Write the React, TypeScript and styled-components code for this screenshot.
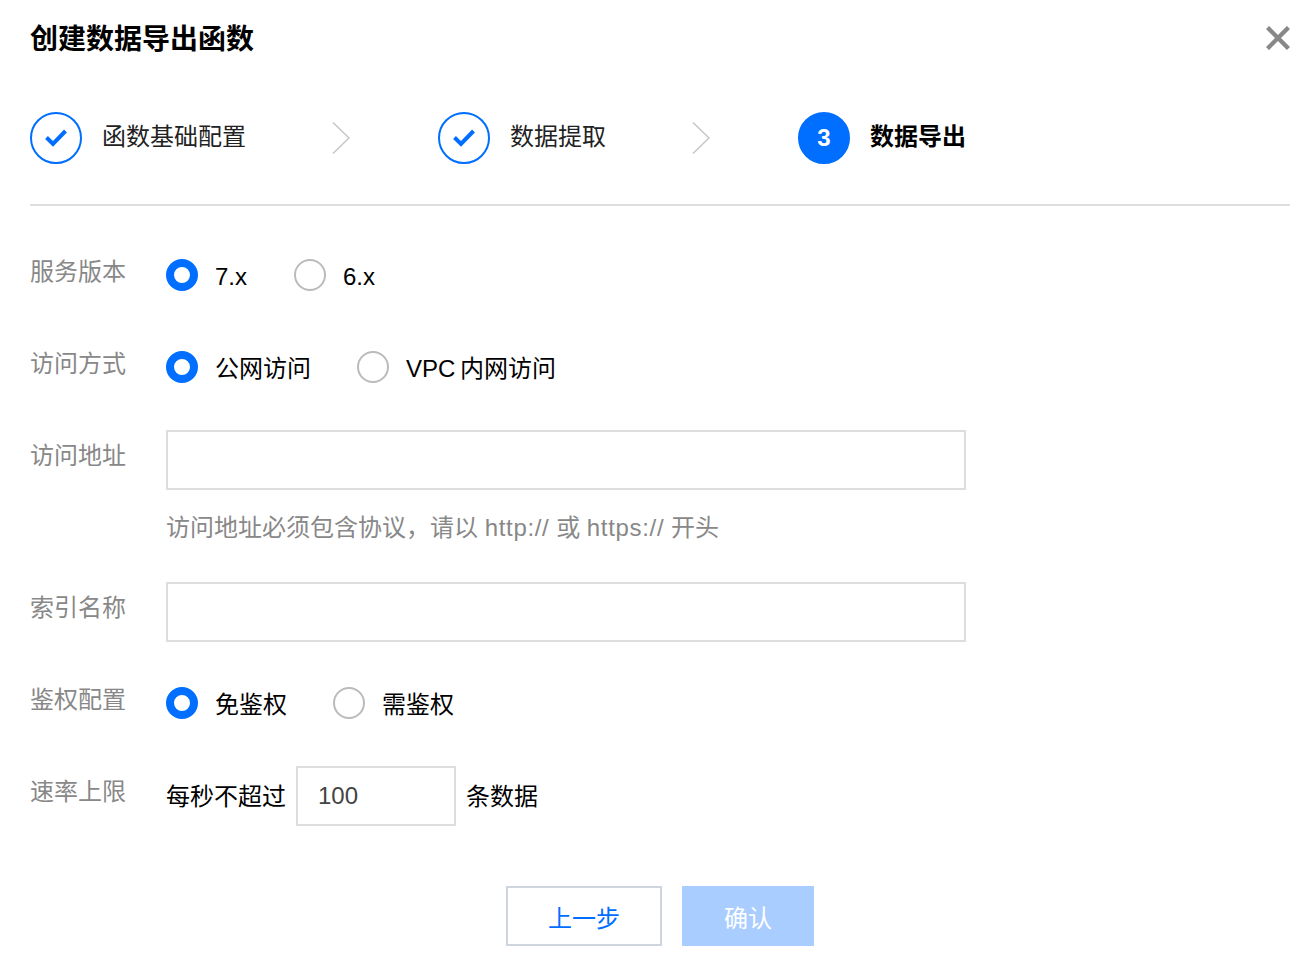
import styled, { createGlobalStyle } from "styled-components";

const GlobalStyle = createGlobalStyle`
  html, body {
    margin: 0;
    padding: 0;
    background: #fff;
  }
  * {
    box-sizing: border-box;
  }
  body, input, button {
    font-family: "Liberation Sans", "Noto Sans CJK SC", sans-serif;
  }
`;

const blue = "#006eff";

const Dialog = styled.div`
  width: 1316px;
  height: 964px;
  padding: 20px 26px 18px 30px;
  overflow: hidden;
  font-size: 24px;
  color: #000;
`;

const TitleBar = styled.div`
  display: flex;
  align-items: center;
  justify-content: space-between;
  height: 36px;
`;

const Title = styled.h2`
  margin: 4px 0 0;
  font-size: 28px;
  line-height: 36px;
  font-weight: 700;
`;

const CloseBtn = styled.svg`
  display: block;
  width: 24px;
  height: 24px;
`;

const Steps = styled.div`
  display: flex;
  align-items: center;
  margin-top: 56px;
  height: 52px;
`;

const Step = styled.div`
  display: flex;
  align-items: center;
`;

const StepCircle = styled.div<{ $active?: boolean }>`
  width: 52px;
  height: 52px;
  border-radius: 50%;
  display: flex;
  align-items: center;
  justify-content: center;
  border: 2px solid ${blue};
  background: ${(props) => (props.$active ? blue : "#fff")};
  color: #fff;
  font-size: 24px;
  font-weight: 700;
`;

const StepLabel = styled.span<{ $active?: boolean }>`
  font-size: 24px;
  line-height: 36px;
  margin-left: 20px;
  margin-top: -2px;
  font-weight: ${(props) => (props.$active ? 700 : 400)};
  color: ${(props) => (props.$active ? "#000" : "#222")};
`;

const StepArrow = styled.svg`
  display: block;
  width: 18px;
  height: 32px;
  margin: 0 88px 0 86px;
  flex: none;
`;

const Divider = styled.div`
  width: 1260px;
  height: 2px;
  margin-top: 40px;
  background: #ddd;
`;

const Form = styled.div`
  display: flex;
  flex-direction: column;
  gap: 32px;
  margin-top: 40px;
`;

const Row = styled.div`
  display: flex;
  align-items: flex-start;
`;

const Label = styled.div`
  width: 136px;
  flex: none;
  line-height: 52px;
  color: #888;
`;

const Control = styled.div`
  min-height: 60px;
  display: flex;
  flex-direction: column;
`;

const RadioGroup = styled.div`
  display: flex;
  align-items: center;
  gap: 46px;
  height: 58px;
`;

const RadioItem = styled.label`
  display: flex;
  align-items: center;
  gap: 17px;
`;

const RadioDot = styled.span<{ $checked?: boolean }>`
  width: 32px;
  height: 32px;
  border-radius: 50%;
  flex: none;
  background: #fff;
  border: ${(props) => (props.$checked ? `8px solid ${blue}` : "2px solid #bbb")};
`;

const RadioText = styled.span<{ $latin?: boolean }>`
  margin: ${(props) => (props.$latin ? "4px 1px 0 0" : "0 0 2px")};
  word-spacing: -2px;
`;

const TextInput = styled.input<{ $w: number }>`
  display: block;
  width: ${(props) => props.$w}px;
  height: 60px;
  padding: 0 20px;
  border: 2px solid #ddd;
  border-radius: 0;
  outline: none;
  background: #fff;
  font-size: 24px;
  color: #444;
`;

const Help = styled.div`
  height: 60px;
  padding-top: 20px;
  line-height: 36px;
  color: #888;
`;

const HelpLink = styled.span`
  letter-spacing: 0.68px;
`;

const RateLine = styled.div`
  display: flex;
  align-items: center;
  gap: 10px;
  height: 60px;
`;

const RateText = styled.span`
  margin-bottom: 4px;
`;

const Footer = styled.div`
  display: flex;
  justify-content: center;
  gap: 20px;
  width: 1260px;
  margin-top: 60px;
`;

const Button = styled.button<{ $primary?: boolean }>`
  height: 60px;
  width: ${(props) => (props.$primary ? "132px" : "156px")};
  padding: 0;
  border: ${(props) => (props.$primary ? "none" : "2px solid #cfd5de")};
  border-radius: 0;
  background: ${(props) => (props.$primary ? "#aacdff" : "#fff")};
  color: ${(props) => (props.$primary ? "#fff" : blue)};
  font-size: 24px;
`;

function Check() {
  return (
    <svg width="24" height="20" viewBox="0 0 24 20" fill="none">
      <path d="M2.5 9.5 L9 16 L21.5 3" stroke={blue} strokeWidth="4" />
    </svg>
  );
}

function Arrow() {
  return (
    <StepArrow viewBox="0 0 18 32" fill="none">
      <path d="M1 0.5 L17 16 L1 31.5" stroke="#c4c4c4" strokeWidth="1.4" />
    </StepArrow>
  );
}

function Radio({ checked, latin, children }: { checked?: boolean; latin?: boolean; children: string }) {
  return (
    <RadioItem>
      <RadioDot $checked={checked} />
      <RadioText $latin={latin}>{children}</RadioText>
    </RadioItem>
  );
}

export default function App() {
  return (
    <Dialog>
      <GlobalStyle />
      <TitleBar>
        <Title>创建数据导出函数</Title>
        <CloseBtn viewBox="0 0 24 24" fill="none">
          <path d="M1.5 1.5 L22.5 22.5 M22.5 1.5 L1.5 22.5" stroke="#888" strokeWidth="4.4" />
        </CloseBtn>
      </TitleBar>

      <Steps>
        <Step>
          <StepCircle>
            <Check />
          </StepCircle>
          <StepLabel>函数基础配置</StepLabel>
        </Step>
        <Arrow />
        <Step>
          <StepCircle>
            <Check />
          </StepCircle>
          <StepLabel>数据提取</StepLabel>
        </Step>
        <Arrow />
        <Step>
          <StepCircle $active>3</StepCircle>
          <StepLabel $active>数据导出</StepLabel>
        </Step>
      </Steps>

      <Divider />

      <Form>
        <Row>
          <Label>服务版本</Label>
          <Control>
            <RadioGroup>
              <Radio checked latin>7.x</Radio>
              <Radio latin>6.x</Radio>
            </RadioGroup>
          </Control>
        </Row>
        <Row>
          <Label>访问方式</Label>
          <Control>
            <RadioGroup>
              <Radio checked>公网访问</Radio>
              <Radio>VPC 内网访问</Radio>
            </RadioGroup>
          </Control>
        </Row>
        <Row>
          <Label>访问地址</Label>
          <Control>
            <TextInput $w={800} readOnly />
            <Help>
              访问地址必须包含协议，请以 <HelpLink>http://</HelpLink> 或 <HelpLink>https://</HelpLink> 开头
            </Help>
          </Control>
        </Row>
        <Row>
          <Label>索引名称</Label>
          <Control>
            <TextInput $w={800} readOnly />
          </Control>
        </Row>
        <Row>
          <Label>鉴权配置</Label>
          <Control>
            <RadioGroup>
              <Radio checked>免鉴权</Radio>
              <Radio>需鉴权</Radio>
            </RadioGroup>
          </Control>
        </Row>
        <Row>
          <Label>速率上限</Label>
          <Control>
            <RateLine>
              <RateText>每秒不超过</RateText>
              <TextInput $w={160} value="100" readOnly />
              <RateText>条数据</RateText>
            </RateLine>
          </Control>
        </Row>
      </Form>

      <Footer>
        <Button>上一步</Button>
        <Button $primary>确认</Button>
      </Footer>
    </Dialog>
  );
}
